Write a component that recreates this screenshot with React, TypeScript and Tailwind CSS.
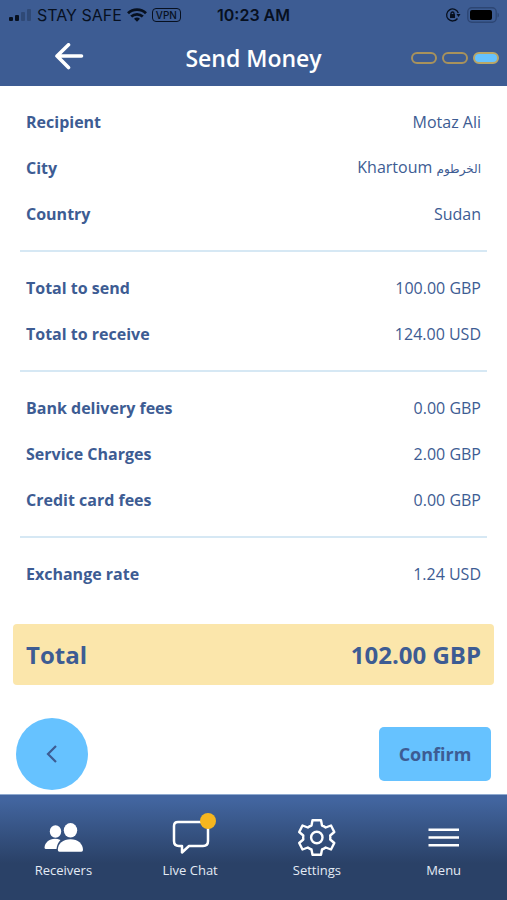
const sections = [
  [
    { label: "Recipient", value: "Motaz Ali" },
    { label: "City", value: "Khartoum", local: "الخرطوم" },
    { label: "Country", value: "Sudan" },
  ],
  [
    { label: "Total to send", value: "100.00 GBP" },
    { label: "Total to receive", value: "124.00 USD" },
  ],
  [
    { label: "Bank delivery fees", value: "0.00 GBP" },
    { label: "Service Charges", value: "2.00 GBP" },
    { label: "Credit card fees", value: "0.00 GBP" },
  ],
  [{ label: "Exchange rate", value: "1.24 USD" }],
];

const tabs = [
  { label: "Receivers", icon: <ReceiversIcon /> },
  { label: "Live Chat", icon: <ChatIcon />, badge: true },
  { label: "Settings", icon: <SettingsIcon /> },
  { label: "Menu", icon: <MenuIcon /> },
];

function ReceiversIcon() {
  return (
    <svg width="40" height="40" viewBox="0 0 40 40" fill="white">
      <ellipse cx="12.500" cy="14.500" rx="5.700" ry="6.200" />
      <path d="M17.500 23C9 19.500 2 24.500 1.500 30.500Q1.500 32 3 32H13.500C14 28 15 25.500 17.500 23Z" />
      <ellipse cx="27.500" cy="13.300" rx="6.700" ry="7.300" />
      <path d="M14.800 33C14.800 26.500 20 22.300 27.500 22.300S40 27 40 33Q40 34.800 38.300 34.800H16.500Q14.800 34.800 14.800 33Z" />
    </svg>
  );
}

function ChatIcon() {
  return (
    <svg width="40" height="40" viewBox="0 0 40 40" fill="none" stroke="white" strokeWidth="2.500" strokeLinejoin="round">
      <path d="M8 5H33Q38 5 38 10V24Q38 29 33 29H19L12 35.500V29H9Q4 29 4 24V9Q4 5 8 5Z" />
    </svg>
  );
}

function SettingsIcon() {
  return (
    <svg width="40" height="40" viewBox="0 0 40 40" fill="none" stroke="white" strokeWidth="2.400" strokeLinejoin="round">
      <path d="M15.500 3.200H24L25 8.500Q27 9.200 28.700 10.500L34 8.500L37.300 15L33.200 18.500Q33.500 20.500 33.200 22.500L37.300 26L34 32.500L28.700 30.500Q27 31.800 25 32.500L24 37.800H15.500L14.500 32.500Q12.500 31.800 10.800 30.500L5.500 32.500L2.200 26L6.300 22.500Q6 20.500 6.300 18.500L2.200 15L5.500 8.500L10.800 10.500Q12.500 9.200 14.500 8.500Z" />
      <circle cx="19.800" cy="20.500" r="5.700" />
    </svg>
  );
}

function MenuIcon() {
  return (
    <svg width="40" height="40" viewBox="0 0 40 40" fill="none" stroke="white" strokeWidth="2.600">
      <path d="M4.500 12.800H35M4.500 20.500H35M4.500 28.200H35" />
    </svg>
  );
}

function StatusBar() {
  return (
    <div className="grid h-[30px] grid-cols-[1fr_auto_1fr] items-center px-2 font-['Inter',sans-serif] text-[16px] leading-5 text-[#07101f]">
      <div className="flex items-center gap-[5px]">
        <svg width="24" height="14" viewBox="0 0 24 14" fill="currentColor">
          <rect x="1" y="9" width="4" height="4" rx="1" />
          <rect x="7" y="7" width="4" height="6" rx="1" />
          <rect x="13" y="4" width="4" height="9" rx="1" opacity="0.25" />
          <rect x="19" y="1" width="4" height="12" rx="1" opacity="0.25" />
        </svg>
        <span>STAY SAFE</span>
        <svg width="20" height="14" viewBox="0 0 20 14" fill="none" stroke="currentColor" strokeWidth="2.800">
          <path d="M1 5.200C6 .4 14 .4 19 5.200M4.200 8.600C7.500 5.500 12.500 5.500 15.800 8.600" />
          <path d="M7 10.800Q10 8.300 13 10.800L10 13.800Z" fill="currentColor" stroke="none" />
        </svg>
        <span className="rounded-[4px] border border-current px-[3px] text-[10px] leading-3 font-medium">VPN</span>
      </div>
      <span className="font-semibold">10:23 AM</span>
      <div className="flex items-center justify-end gap-[6px]">
        <svg width="16" height="16" viewBox="0 0 16 16" fill="none" stroke="currentColor" strokeWidth="1.300">
          <path d="M12.500 11.500A6 6 0 1 1 13.300 6" />
          <path d="M11.500 7H15.500L13.500 10Z" fill="currentColor" stroke="none" />
          <rect x="5" y="7" width="5" height="4" rx="0.500" fill="currentColor" stroke="none" />
          <path d="M6 7.500V6.500A1.500 1.500 0 0 1 9 6.500V7.500" />
        </svg>
        <svg width="32" height="16" viewBox="0 0 32 16">
          <rect x="0.800" y="0.800" width="28.400" height="14.400" rx="4" fill="none" stroke="#2d4674" strokeWidth="1.400" />
          <rect x="3" y="3" width="22" height="10" rx="2" fill="black" />
          <path d="M30.500 5.500Q32 6 32 8T30.500 10.500Z" fill="#2d4674" />
        </svg>
      </div>
    </div>
  );
}

export default function App() {
  return (
    <div className="flex min-h-screen flex-col bg-white font-['Open_Sans','Noto_Sans','DejaVu_Sans',sans-serif] text-[#3d5c93]">
      {/* HEADER */}
      <header className="bg-[#3d5c93]">
        <StatusBar />
        <div className="grid h-14 grid-cols-[1fr_auto_1fr] items-center px-2 text-white">
          <button type="button" aria-label="Back" className="ml-[46px] w-[30px]">
            <svg width="30" height="30" viewBox="0 0 30 30" fill="none" stroke="white" strokeWidth="3.600" strokeLinecap="round" strokeLinejoin="round">
              <path d="M27.500 13H3M14.500 1.800L3 13L14.500 24.500" />
            </svg>
          </button>
          <h1 className="text-[23px] leading-8 font-semibold">Send Money</h1>
          <div className="flex justify-end gap-[5px]">
            <span className="h-3 w-[26px] rounded-full border-2 border-[#a8925c]" />
            <span className="h-3 w-[26px] rounded-full border-2 border-[#a8925c]" />
            <span className="h-3 w-[26px] rounded-full border-2 border-[#b9a666] bg-[#66c2ff]" />
          </div>
        </div>
      </header>

      {/* DETAILS */}
      <main className="flex-1">
        <div className="px-5">
          {sections.map((rows, index) => (
            <dl key={index} className="border-b-2 border-[#d6e8f4] px-[6px] py-[13px] last:border-b-0">
              {rows.map((row) => (
                <div key={row.label} className="flex h-[46px] items-center justify-between text-[16px] leading-6">
                  <dt className="font-bold">{row.label}</dt>
                  <dd>
                    {row.value}
                    {row.local && <> <bdi lang="ar" className="text-[12px]">{row.local}</bdi></>}
                  </dd>
                </div>
              ))}
            </dl>
          ))}
        </div>

        {/* TOTAL */}
        <div className="mx-[13px] mt-[14px] flex h-[61px] items-center justify-between rounded-[4px] bg-[#fbe6ab] px-[13px] text-[24px] leading-8 font-bold">
          <span>Total</span>
          <span>102.00 GBP</span>
        </div>

        {/* ACTIONS */}
        <div className="flex items-center justify-between px-4 pt-[33px] pb-1">
          <button type="button" aria-label="Previous step" className="flex size-[72px] items-center justify-center rounded-full bg-[#66c2ff]">
            <svg width="20" height="20" viewBox="0 0 20 20" fill="none" stroke="currentColor" strokeWidth="2.200">
              <path d="M14 2L6 10L14 18" />
            </svg>
          </button>
          <button type="button" className="h-[54px] w-28 rounded-[5px] bg-[#66c2ff] text-[18px] leading-6 font-bold">
            Confirm
          </button>
        </div>
      </main>

      {/* TABS */}
      <nav className="grid grid-cols-4 border-t border-[#8faad0] bg-linear-to-b from-[#42659f] from-5% to-[#2a4167] to-65% pt-[22px] pb-5">
        {tabs.map((tab) => (
          <a key={tab.label} href="#" className="flex flex-col items-center gap-[3px] text-[13px] leading-5 text-[#e4ebf5]">
            <span className="relative">
              {tab.icon}
              {tab.badge && <span className="absolute -top-1 -right-[6px] size-4 rounded-full bg-[#f6b61f]" />}
            </span>
            {tab.label}
          </a>
        ))}
      </nav>
    </div>
  );
}
